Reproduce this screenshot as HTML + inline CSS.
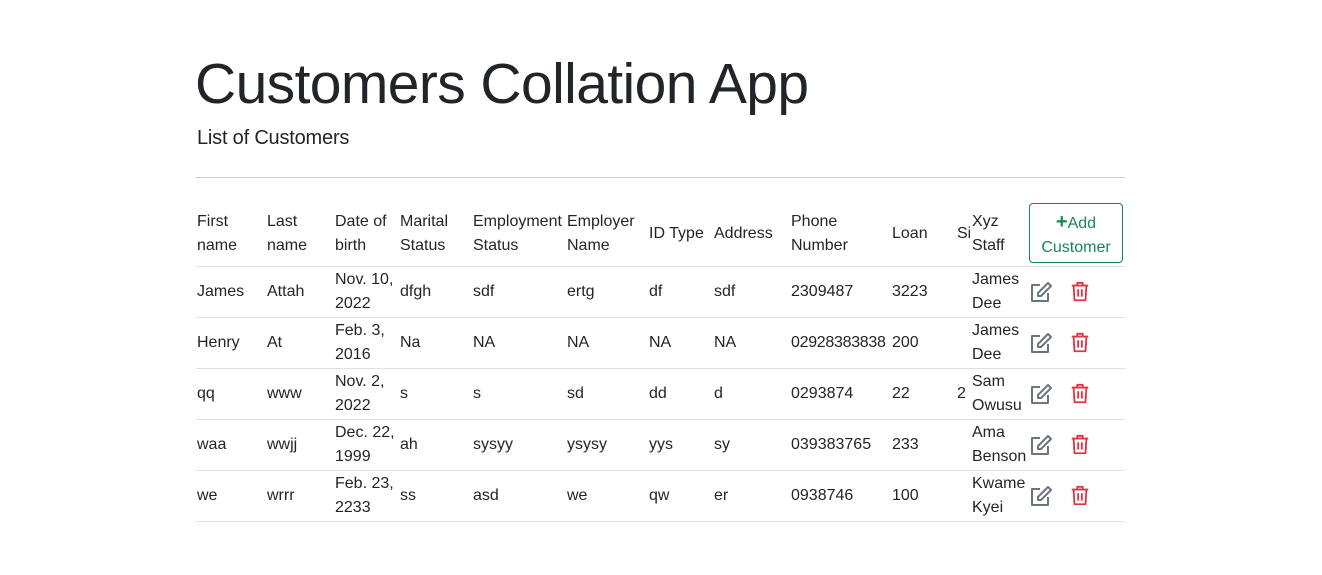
<!DOCTYPE html>
<html><head><meta charset="utf-8"><style>
body{margin:0;width:1322px;height:575px;background:#fff;font-family:"Liberation Sans",sans-serif;color:#212529;position:relative;overflow:hidden}
.a{position:absolute;font-size:16px;line-height:24px;white-space:nowrap}
h1{position:absolute;left:195px;top:44px;margin:0;font-weight:normal;font-size:57px;line-height:80px;letter-spacing:-0.6px;color:#212529}
.sub{position:absolute;left:197px;top:124px;font-size:20px;line-height:28px;letter-spacing:-0.2px}
.line{position:absolute;left:196px;width:929px;height:1px;background:#dee2e6}
.btn{position:absolute;left:1029px;top:203px;width:94px;height:60px;border:1px solid #198754;border-radius:4px;color:#198754;font-size:16px;line-height:24px;text-align:center;box-sizing:border-box;padding-top:6px}
svg{position:absolute}
</style></head><body>
<h1>Customers Collation App</h1>
<div class="sub">List of Customers</div>
<div class="line" style="top:177px;background:#ccc"></div>

<div class="a" style="left:197px;top:210px">First<br>name</div>
<div class="a" style="left:267px;top:210px">Last<br>name</div>
<div class="a" style="left:335px;top:210px">Date of<br>birth</div>
<div class="a" style="left:400px;top:210px">Marital<br>Status</div>
<div class="a" style="left:473px;top:210px">Employment<br>Status</div>
<div class="a" style="left:567px;top:210px;background:#fff">Employer<br>Name</div>
<div class="a" style="left:649px;top:222px">ID Type</div>
<div class="a" style="left:714px;top:222px">Address</div>
<div class="a" style="left:791px;top:210px">Phone<br>Number</div>
<div class="a" style="left:892px;top:222px">Loan</div>
<div class="a" style="left:957px;top:222px;width:13px;overflow:hidden">Si</div>
<div class="a" style="left:972px;top:210px">Xyz<br>Staff</div>
<div class="btn"><b style="font-size:20px">+</b>Add<br>Customer</div>
<div class="line" style="top:266px"></div>

<!-- rows -->
<div class="a" style="left:197px;top:280px">James</div><div class="a" style="left:267px;top:280px">Attah</div><div class="a" style="left:335px;top:268px">Nov. 10,<br>2022</div><div class="a" style="left:400px;top:280px">dfgh</div><div class="a" style="left:473px;top:280px">sdf</div><div class="a" style="left:567px;top:280px">ertg</div><div class="a" style="left:649px;top:280px">df</div><div class="a" style="left:714px;top:280px">sdf</div><div class="a" style="left:791px;top:280px">2309487</div><div class="a" style="left:892px;top:280px">3223</div><div class="a" style="left:972px;top:268px">James<br>Dee</div>
<div class="line" style="top:317px"></div>
<div class="a" style="left:197px;top:331px">Henry</div><div class="a" style="left:267px;top:331px">At</div><div class="a" style="left:335px;top:319px">Feb. 3,<br>2016</div><div class="a" style="left:400px;top:331px">Na</div><div class="a" style="left:473px;top:331px">NA</div><div class="a" style="left:567px;top:331px">NA</div><div class="a" style="left:649px;top:331px">NA</div><div class="a" style="left:714px;top:331px">NA</div><div class="a" style="left:791px;top:331px;letter-spacing:-0.3px">02928383838</div><div class="a" style="left:892px;top:331px">200</div><div class="a" style="left:972px;top:319px">James<br>Dee</div>
<div class="line" style="top:368px"></div>
<div class="a" style="left:197px;top:382px">qq</div><div class="a" style="left:267px;top:382px">www</div><div class="a" style="left:335px;top:370px">Nov. 2,<br>2022</div><div class="a" style="left:400px;top:382px">s</div><div class="a" style="left:473px;top:382px">s</div><div class="a" style="left:567px;top:382px">sd</div><div class="a" style="left:649px;top:382px">dd</div><div class="a" style="left:714px;top:382px">d</div><div class="a" style="left:791px;top:382px">0293874</div><div class="a" style="left:892px;top:382px">22</div><div class="a" style="left:957px;top:382px;width:10px;overflow:hidden">2</div><div class="a" style="left:972px;top:370px">Sam<br>Owusu</div>
<div class="line" style="top:419px"></div>
<div class="a" style="left:197px;top:433px">waa</div><div class="a" style="left:267px;top:433px">wwjj</div><div class="a" style="left:335px;top:421px">Dec. 22,<br>1999</div><div class="a" style="left:400px;top:433px">ah</div><div class="a" style="left:473px;top:433px">sysyy</div><div class="a" style="left:567px;top:433px">ysysy</div><div class="a" style="left:649px;top:433px">yys</div><div class="a" style="left:714px;top:433px">sy</div><div class="a" style="left:791px;top:433px">039383765</div><div class="a" style="left:892px;top:433px">233</div><div class="a" style="left:972px;top:421px">Ama<br>Benson</div>
<div class="line" style="top:470px"></div>
<div class="a" style="left:197px;top:484px">we</div><div class="a" style="left:267px;top:484px">wrrr</div><div class="a" style="left:335px;top:472px">Feb. 23,<br>2233</div><div class="a" style="left:400px;top:484px">ss</div><div class="a" style="left:473px;top:484px">asd</div><div class="a" style="left:567px;top:484px">we</div><div class="a" style="left:649px;top:484px">qw</div><div class="a" style="left:714px;top:484px">er</div><div class="a" style="left:791px;top:484px">0938746</div><div class="a" style="left:892px;top:484px">100</div><div class="a" style="left:972px;top:472px">Kwame<br>Kyei</div>
<div class="line" style="top:521px"></div>

<svg width="0" height="0"><defs>
<g id="ed" fill="none" stroke="#6c757d" stroke-width="2" stroke-linejoin="round"><path d="M11 4H3v16h16v-8"/><path d="M19 2l3 3-10 10H9v-3z"/></g>
<g id="tr" fill="none" stroke="#dc3545" stroke-width="2" stroke-linejoin="round"><path d="M3 5h18M9 5V2h6v3M5 5l1 16h12l1-16M10 9v8M14 9v8"/></g>
</defs></svg>
<svg style="left:1029px;top:281px" width="24" height="24" viewBox="0 0 24 24"><use href="#ed"/></svg>
<svg style="left:1069px;top:281px" width="22" height="22" viewBox="0 0 24 24"><use href="#tr"/></svg>
<svg style="left:1029px;top:332px" width="24" height="24" viewBox="0 0 24 24"><use href="#ed"/></svg>
<svg style="left:1069px;top:332px" width="22" height="22" viewBox="0 0 24 24"><use href="#tr"/></svg>
<svg style="left:1029px;top:383px" width="24" height="24" viewBox="0 0 24 24"><use href="#ed"/></svg>
<svg style="left:1069px;top:383px" width="22" height="22" viewBox="0 0 24 24"><use href="#tr"/></svg>
<svg style="left:1029px;top:434px" width="24" height="24" viewBox="0 0 24 24"><use href="#ed"/></svg>
<svg style="left:1069px;top:434px" width="22" height="22" viewBox="0 0 24 24"><use href="#tr"/></svg>
<svg style="left:1029px;top:485px" width="24" height="24" viewBox="0 0 24 24"><use href="#ed"/></svg>
<svg style="left:1069px;top:485px" width="22" height="22" viewBox="0 0 24 24"><use href="#tr"/></svg>
</body></html>
